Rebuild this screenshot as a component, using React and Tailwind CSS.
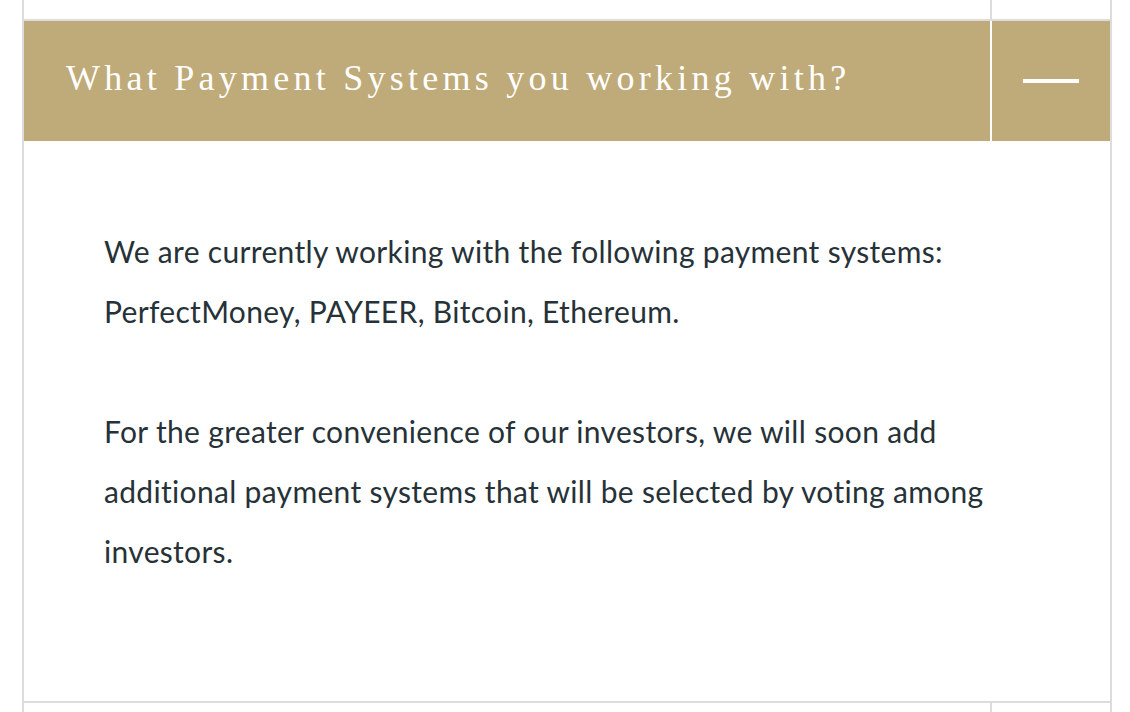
import React, { useState } from "react";

const faq = {
  question: "What Payment Systems you working with?",
  answer: [
    "We are currently working with the following payment systems: PerfectMoney, PAYEER, Bitcoin, Ethereum.",
    "For the greater convenience of our investors, we will soon add additional payment systems that will be selected by voting among investors.",
  ],
};

const CollapsedEdge = ({ className }) => (
  <div className={`flex border-x-2 border-[#dcdcdc] ${className}`}>
    <div className="flex-1" />
    <div className="w-[120px] border-l-2 border-[#dcdcdc]" />
  </div>
);

const App = () => {
  const [open, setOpen] = useState(true);

  return (
    <div className="min-h-[712px] bg-white pl-[22px] overflow-hidden">
      <div className="w-[1090px]">
        <CollapsedEdge className="h-[19px]" />

        <div className="border-2 border-[#dcdcdc]">
          <div
            className="flex h-[120px] bg-[#bfaa79] cursor-pointer"
            onClick={() => setOpen(!open)}
          >
            <h3 className="flex-1 flex items-center pl-[42px] pb-[6px] text-white text-[36px] tracking-[0.118em] font-['Liberation_Serif',serif] font-normal">
              {faq.question}
            </h3>
            <div className="w-[120px] border-l-2 border-white flex items-center justify-center">
              <span className="block w-[56px] h-[4px] bg-white" />
            </div>
          </div>

          {open && (
            <div className="pt-[80px] pb-[120px] pl-[80px] pr-[80px] text-[30px] leading-[60px] tracking-[0.32px] text-[#263238] font-['Lato',sans-serif]">
              {faq.answer.map((p, i) => (
                <p key={i} className={i > 0 ? "mt-[60px]" : ""}>
                  {p}
                </p>
              ))}
            </div>
          )}
        </div>

        <CollapsedEdge className="h-[40px] border-t-0" />
      </div>
    </div>
  );
};

export default App;
